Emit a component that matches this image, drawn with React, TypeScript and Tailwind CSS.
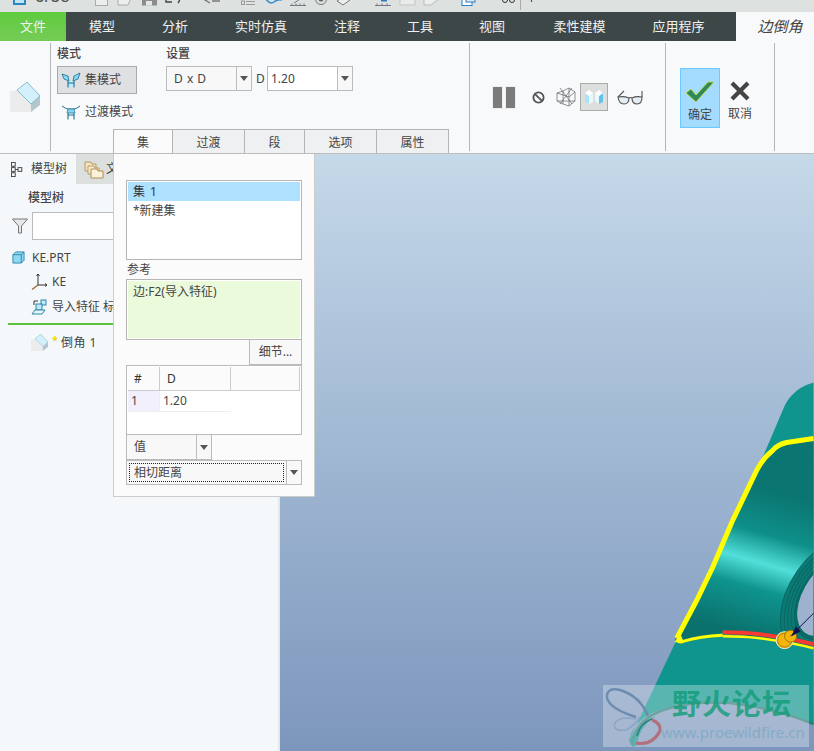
import React from "react";

const TABS = [
  { label: "模型", w: "w-[72px]" },
  { label: "分析", w: "w-[74px]" },
  { label: "实时仿真", w: "w-[98px]" },
  { label: "注释", w: "w-[74px]" },
  { label: "工具", w: "w-[72px]" },
  { label: "视图", w: "w-[72px]" },
  { label: "柔性建模", w: "w-[103px]" },
  { label: "应用程序", w: "w-[95px]" },
];

const SUB_TABS = [
  { label: "集", w: "w-[60px]", active: true },
  { label: "过渡", w: "w-[72px]" },
  { label: "段", w: "w-[60px]" },
  { label: "选项", w: "w-[72px]" },
  { label: "属性", w: "w-[72px]" },
];

function Arrow() {
  return <span className="h-0 w-0 border-x-[4px] border-t-[5px] border-x-transparent border-t-[#555]" />;
}

function ArrowBox({ className }: { className: string }) {
  return (
    <span className={`flex shrink-0 items-center justify-center self-stretch border-l border-[#bbb] ${className}`}>
      <Arrow />
    </span>
  );
}

function ChamferIcon({ className }: { className: string }) {
  return (
    <svg viewBox="10 82 30 30" className={className}>
      <polygon points="10,91 17,90 31,104 31,112 10,112" fill="#ececec" />
      <polygon points="10,91 20,83 27,82 17,90" fill="#fbfbfb" />
      <polygon points="31,104 40,96 40,105 31,112" fill="#b5c6cb" />
      <polygon points="17,90 27,82 40,96 31,104" fill="#d3f0fc" stroke="#5aa5bd" strokeWidth="0.7" />
    </svg>
  );
}

function SetModeIcon() {
  return (
    <svg viewBox="0 0 20 16" className="h-4 w-5 shrink-0">
      <path d="M1 2 L7 4 L8 9 L3 7Z M19 1 L13 4 L12 9 L17 7Z" fill="#86d6f5" stroke="#1d6f8f" strokeWidth="0.8" />
      <path d="M7 9 H13 V15 H7Z" fill="#b8ebfb" />
      <path d="M7 9 V15.5 M13 9 V15.5 M7 11 H13" stroke="#1d6f8f" strokeWidth="1.1" fill="none" />
    </svg>
  );
}

function BlendModeIcon() {
  return (
    <svg viewBox="0 0 20 16" className="h-4 w-5 shrink-0">
      <path d="M1 2 Q5 5 7 5 H13 Q15 5 19 2" stroke="#1d6f8f" strokeWidth="1" fill="none" />
      <path d="M7 5 H13 L14 9 H6Z" fill="#86d6f5" stroke="#1d6f8f" strokeWidth="0.7" />
      <path d="M7 9 V15.5 M13 9 V15.5 M7 11 H13" stroke="#1d6f8f" strokeWidth="1.1" fill="none" />
    </svg>
  );
}

function TopIcons() {
  // the quick access icons are cut off by the top of the window
  return (
    <svg viewBox="90 0 450 12" className="h-3 w-[450px] shrink-0" fill="none">
      <rect x="95.5" y="-6" width="12" height="11.5" fill="#eceeee" stroke="#aaa" />
      <path d="M118 -4 H132 L128 5 H118Z" fill="#eceeee" stroke="#aaa" />
      <rect x="142" y="-4" width="15" height="9.5" fill="#8c8c8c" />
      <rect x="146" y="1" width="6" height="4.5" fill="#e5e5e5" />
      <path d="M166 -1 V2 H172 M178 -3 Q181 0 178 3" stroke="#444" strokeWidth="1.4" />
      <path d="M210 -3 L205 0 L210 3 M212 1 H220" stroke="#777" strokeWidth="1.4" />
      <path d="M246 1.5 H255 M246 4.5 H255" stroke="#999" />
      <rect x="241.5" y="1" width="3" height="3.5" stroke="#999" />
      <path d="M265 -2 Q270 5 274 2 T282 0" stroke="#2f8fd0" strokeWidth="1.5" />
      <path d="M290 5.5 H306 M292 3.5 V5.5 M296 3.5 V5.5 M300 3.5 V5.5 M304 3.5 V5.5 M294 3 L302 -2" stroke="#778" />
      <circle cx="321" cy="-1" r="5.5" stroke="#777" />
      <circle cx="321" cy="-1" r="2.5" fill="#666" />
      <path d="M337 1 L343 -3 L350 0 L343 5Z" fill="#eee" stroke="#777" />
      <path d="M375 5.5 H391 M377 3.5 V5.5 M382 3.5 V5.5 M387 3.5 V5.5" stroke="#778" />
      <rect x="381" y="-2" width="6" height="3.5" fill="#2b7fc0" />
      <rect x="400" y="-6" width="15" height="11" fill="#e9ebeb" stroke="#c4c4c4" />
      <path d="M424 -2 H440 L431 5 H424Z" fill="#eceeee" stroke="#bbb" />
      <rect x="462" y="-3" width="10" height="8.5" fill="#fff" stroke="#2b7fc0" />
      <rect x="466" y="-5" width="9" height="7" fill="#dfe8ee" stroke="#2b7fc0" />
      <circle cx="505" cy="0" r="2.5" stroke="#333" />
      <circle cx="512" cy="0" r="2.5" stroke="#333" />
      <path d="M520.5 0 V10" stroke="#aaa" />
      <path d="M531.5 -1 V2" stroke="#555" strokeWidth="1.2" />
    </svg>
  );
}

function Model() {
  return (
    <svg viewBox="280 153 534 598" className="absolute inset-0 h-full w-full">
      <defs>
        <linearGradient id="band" gradientUnits="userSpaceOnUse" x1="772" y1="490" x2="732" y2="630">
          <stop offset="0" stopColor="#0b7571" />
          <stop offset="0.3" stopColor="#0e8f89" />
          <stop offset="0.5" stopColor="#52dfd9" />
          <stop offset="0.68" stopColor="#0f948e" />
          <stop offset="1" stopColor="#0a716d" />
        </linearGradient>
        <clipPath id="face">
          <path d="M814 438 L787 442 Q778 444 773 450 Q763 458 757 470 L733 520 L713 567 L697 600 L675 640 L682 642 Q700 635 722 633 L760 637 L814 647Z" />
        </clipPath>
      </defs>
      <path
        d="M814 382 Q800 386 792 395 Q787 400 783 410 L763 457 L629 741 Q632 725 650 714 Q680 700 730 703 Q775 708 814 724Z"
        fill="#10958e"
      />
      <path d="M629 741 L633 747 L637 745 Q640 725 657 716 Q640 720 629 741Z" fill="#10958e" />
      <path d="M814 438 L787 442 Q778 444 773 450 Q763 458 757 470 L733 520 L713 567 L697 600 L675 640 L682 642 Q700 635 722 633 L760 637 L814 647Z" fill="url(#band)" />
      <g clipPath="url(#face)" fill="none" stroke="#0a6662" strokeWidth="1">
        <ellipse cx="832" cy="595" rx="66" ry="42" transform="rotate(-55 832 595)" fill="#0b7a75" />
        <ellipse cx="832" cy="595" rx="62" ry="38" transform="rotate(-55 832 595)" />
        <ellipse cx="832" cy="595" rx="58" ry="35" transform="rotate(-55 832 595)" />
        <ellipse cx="832" cy="595" rx="54" ry="32" transform="rotate(-55 832 595)" />
        <ellipse cx="832" cy="595" rx="50" ry="29" transform="rotate(-55 832 595)" fill="#0a6a66" />
        <ellipse cx="832" cy="595" rx="46" ry="27" transform="rotate(-55 832 595)" fill="#9db2ce" stroke="none" />
      </g>
      <path
        d="M814 438 L787 442 Q778 444 773 450 Q763 458 757 470 L733 520 L713 567 L697 600 L677 638"
        fill="none"
        stroke="#ffff00"
        strokeWidth="5"
      />
      <path d="M675 642 L684 642 L680 632Z" fill="#ffff00" />
      <path d="M677 640 Q680 643 684 641 Q700 636 723 635" fill="none" stroke="#ffff00" strokeWidth="3" />
      <path d="M723 636 Q745 636 760 638 Q790 642 814 648" fill="none" stroke="#ffff00" strokeWidth="2.5" />
      <path d="M723 632 Q745 632 760 634 Q790 638 814 644" fill="none" stroke="#f93a32" strokeWidth="4" />
      <circle cx="785" cy="640" r="8.5" fill="#f5b40a" stroke="#e8e8d8" strokeWidth="1" />
      <circle cx="785" cy="640" r="7" fill="none" stroke="#8a6a10" strokeWidth="0.7" />
      <circle cx="791" cy="636" r="6" fill="#f5b40a" stroke="#8a6a10" strokeWidth="0.8" />
      <path d="M791 636 L814 613" stroke="#10104f" strokeWidth="1" />
      <path d="M792 636 L796 626 L801 631Z" fill="#10104f" />
      <path d="M632 745 Q634 726 652 715 Q682 700 730 703 Q775 708 814 724" fill="none" stroke="#2c7d76" strokeWidth="2.5" />
    </svg>
  );
}

function Watermark() {
  return (
    <div className="absolute left-[323px] top-[531px] flex h-[62px] w-[206px] bg-white/30">
      <svg viewBox="603 684 60 62" className="h-[62px] w-[60px] shrink-0" fill="none">
        <path d="M648 715 Q640 695 620 689 Q606 686 607 697 Q610 708 636 716" stroke="#6d8db0" strokeWidth="2.5" />
        <path d="M636 718 Q620 715 615 722 Q612 731 626 729 Q634 725 640 716" stroke="#8ba5c4" strokeWidth="1.5" />
        <path d="M652 719 Q661 722 660 730 Q652 745 636 742" stroke="#b2707c" strokeWidth="3" />
        <path d="M652 718 Q640 722 637 735" stroke="#2f7f86" strokeWidth="1.5" />
      </svg>
      <div className="flex flex-col pl-[9px]">
        <span className="whitespace-nowrap pt-[1px] text-[29px] font-bold leading-[36px] tracking-[1px] text-[#0f9c78]/80">
          野火论坛
        </span>
        <span className="-ml-[11px] whitespace-nowrap text-[15px] leading-[20px] text-[#83abc6]">
          www.proewildfire.cn
        </span>
      </div>
    </div>
  );
}

function Popup() {
  return (
    <div className="absolute left-[113px] top-0 z-10 flex h-[343px] w-[202px] flex-col border-x border-b border-[#ccc] bg-[#fbfbfb] px-[12px] pt-[26px] text-[12px] text-[#444]">
      <div className="h-[80px] border border-[#b5b5b5] bg-white p-[1px]">
        <div className="flex h-[19px] items-center bg-[#aee0ff] pl-[5px] tracking-[1px] text-[#333]">集 1</div>
        <div className="flex h-[19px] items-center pl-[5px]">*新建集</div>
      </div>
      <div className="flex h-[19px] items-center pl-[1px]">参考</div>
      <div className="h-[61px] border border-[#b5b5b5] bg-white p-[1px]">
        <div className="h-full bg-[#ecfadc] pl-[5px] pt-[2px] leading-[18px]">边:F2(导入特征)</div>
      </div>
      <div className="flex justify-end">
        <button className="h-[25px] w-[53px] border border-[#bbb] border-t-0 bg-[#f8f8f8] text-[12px] text-[#444]">细节...</button>
      </div>
      <div className="h-[70px] border border-[#bbb] bg-white p-[1px]">
        <div className="flex h-[24px] border-b border-[#ccc] bg-[#fbfbfb] text-[#333]">
          <div className="flex w-[32px] items-center border-r border-[#ccc] pl-[6px]">#</div>
          <div className="flex w-[71px] items-center border-r border-[#ccc] pl-[7px]">D</div>
          <div className="flex-1 border-r border-[#ccc]" />
        </div>
        <div className="flex h-[21px]">
          <div className="flex w-[32px] items-center border-r border-b border-[#eee] bg-[#f3f0fd] pl-[3px]">1</div>
          <div className="flex w-[71px] items-center border-b border-[#eee] pl-[3px]">1.20</div>
        </div>
      </div>
      <div className="flex h-[25px] w-[86px] border border-t-0 border-[#bbb] bg-[#f8f8f8]">
        <span className="flex flex-1 items-center pl-[7px]">值</span>
        <ArrowBox className="w-[15px]" />
      </div>
      <div className="flex h-[25px] border border-[#bbb] bg-[#f8f8f8]">
        <span className="m-[2px] flex flex-1 items-center border border-dotted border-[#222] pl-[4px]">相切距离</span>
        <ArrowBox className="w-[15px]" />
      </div>
    </div>
  );
}

function LeftPanel() {
  return (
    <div className="relative w-[280px] shrink-0 overflow-hidden border-r-2 border-[#e4e8ea] bg-[#f5f8fa] text-[12px] text-[#444]">
      <div className="flex h-[30px]">
        <div className="flex w-[76px] items-center gap-[5px] pl-[11px]">
          <svg viewBox="0 0 16 16" className="h-[15px] w-[15px] shrink-0" fill="none" stroke="#444" strokeWidth="1">
            <rect x="0.5" y="0.5" width="4" height="4" />
            <rect x="0.5" y="6" width="4" height="4" />
            <rect x="0.5" y="11.5" width="4" height="4" />
            <rect x="7.5" y="6" width="4" height="4" />
            <path d="M2.5 4.5 V6 M2.5 10 V11.5 M4.5 8 H7.5" />
          </svg>
          <span>模型树</span>
        </div>
        <div className="flex w-[110px] items-center gap-[2px] bg-[#dbe0df] pl-[8px]">
          <svg viewBox="0 0 20 20" className="h-5 w-5 shrink-0">
            <path d="M1 3 H7 L8 5 H12 V12 H1Z" fill="#f5e3bd" stroke="#b79a66" />
            <path d="M4 7 H10 L11 9 H15 V15 H4Z" fill="#f8ecd0" stroke="#b79a66" />
            <path d="M7 10 H13 L14 12 H19 V19 H7Z" fill="#fbf2dc" stroke="#b08e55" />
          </svg>
          <span>文件夹</span>
        </div>
      </div>
      <div className="pl-[28px] pt-[5px] font-medium leading-[18px]">模型树</div>
      <div className="mt-[5px] flex items-center gap-[4px] pl-[12px]">
        <svg viewBox="0 0 16 16" className="h-4 w-4 shrink-0">
          <path d="M0.5 1 H15.5 L9.5 8 V15 L6.5 15 V8Z" fill="#e8e8e8" stroke="#777" />
        </svg>
        <div className="h-[28px] w-[200px] border border-[#bbb] bg-white" />
      </div>
      <div className="mt-[5px] flex h-[25px] items-center gap-[7px] pl-[12px]">
        <svg viewBox="0 0 14 14" className="h-[13px] w-[13px] shrink-0">
          <path d="M1 4 L4 1 H13 V10 L10 13 H1Z" fill="#8fd8f4" stroke="#2c86a8" />
          <path d="M1 4 H10 V13 M10 4 L13 1" fill="none" stroke="#2c86a8" />
        </svg>
        <span className="leading-none">KE.PRT</span>
      </div>
      <div className="flex h-[24px] items-center gap-[5px] pl-[31px]">
        <svg viewBox="0 0 16 16" className="h-4 w-4 shrink-0" fill="none">
          <path d="M7 0 V11 H16 M5.5 2 L7 0 L8.5 2 M14 9.5 L16 11 L14 12.5" stroke="#333" />
          <path d="M7 11 L1 15.5" stroke="#a0662a" strokeWidth="1.3" />
        </svg>
        <span>KE</span>
      </div>
      <div className="flex h-[25px] items-center gap-[5px] pl-[31px]">
        <svg viewBox="0 0 16 16" className="h-4 w-4 shrink-0" fill="none">
          <rect x="10" y="1" width="5" height="5" fill="#bfe9f9" stroke="#2c86a8" />
          <rect x="5" y="5" width="6" height="6" fill="#bfe9f9" stroke="#2c86a8" />
          <path d="M1 15 L4 11 H14 L11 15Z" fill="#e8f6fb" stroke="#2c86a8" />
          <path d="M3 2 H7 M3 2 V6" stroke="#333" />
        </svg>
        <span className="whitespace-nowrap">导入特征 标识39</span>
      </div>
      <div className="ml-[8px] mt-[4px] h-[2px] w-[270px] bg-[#5cc13c]" />
      <div className="mt-[9px] flex h-[17px] items-center pl-[31px]">
        <ChamferIcon className="h-[17px] w-[17px] shrink-0" />
        <span className="ml-[4px] -mt-[6px] text-[11px] font-bold leading-none text-[#e8d800]">*</span>
        <span className="ml-[3px] tracking-[0.5px]">倒角 1</span>
      </div>
    </div>
  );
}

export default function App() {
  return (
    <div className="relative flex h-[751px] w-[814px] flex-col overflow-hidden font-['Noto_Sans','Noto_Sans_CJK_SC',sans-serif] text-[12px] text-[#444]">
      {/* title bar, cut off at the top of the window */}
      <div className="flex h-[12px] shrink-0 overflow-hidden bg-[#dde2e1]">
        <div className="flex h-[12px] w-[90px] shrink-0 items-start pl-[13px]">
          <span className="block h-[5px] w-[13px] border-2 border-t-0 border-[#2c86c0] bg-[#bfe4f5]" />
          <span className="-mt-[11px] ml-[9px] font-['Liberation_Sans',sans-serif] text-[18px] leading-[14px] text-[#555]">creo</span>
        </div>
        <TopIcons />
      </div>

      {/* ribbon tabs */}
      <div className="flex h-[29px] shrink-0 bg-[#3d4748] text-[13px] text-[#f0f2f2]">
        <div className="flex w-[66px] items-center justify-center bg-gradient-to-b from-[#5ecb3e] to-[#75cc55]">文件</div>
        {TABS.map((t) => (
          <div key={t.label} className={`flex items-center justify-center ${t.w}`}>{t.label}</div>
        ))}
        <div className="w-[10px]" />
        <div className="flex flex-1 items-center justify-center bg-[#f8f9fb] pl-[10px] text-[15px] italic text-[#444]">边倒角</div>
      </div>

      {/* ribbon */}
      <div className="flex h-[113px] shrink-0 border-b border-[#bdbdbd] bg-[#f8f9fb]">
        <div className="flex w-[50px] shrink-0 items-center pl-[10px]">
          <ChamferIcon className="h-[30px] w-[30px]" />
        </div>
        <div className="my-[2px] w-px shrink-0 bg-[#b5b5b5]" />
        <div className="flex w-[418px] shrink-0 flex-col justify-between">
          <div className="flex pl-[6px] pt-[5px]">
            <div className="w-[109px]">
              <div className="font-medium leading-[16px] text-[#444]">模式</div>
              <div className="mt-[4px] flex h-[28px] w-[80px] items-center gap-[4px] border border-[#aaa] bg-[#dfe0e1] pl-[3px]">
                <SetModeIcon />
                <span>集模式</span>
              </div>
              <div className="mt-[4px] flex h-[28px] items-center gap-[4px] pl-[4px]">
                <BlendModeIcon />
                <span>过渡模式</span>
              </div>
            </div>
            <div>
              <div className="font-medium leading-[16px]">设置</div>
              <div className="mt-[4px] flex items-center">
                <div className="flex h-[25px] w-[86px] border border-[#bbb] bg-[#f8f8f8]">
                  <span className="flex flex-1 items-center pl-[7px] tracking-[0.5px]">D x D</span>
                  <ArrowBox className="w-[15px]" />
                </div>
                <span className="ml-[4px] w-[11px]">D</span>
                <div className="flex h-[25px] w-[86px] border border-[#bbb] bg-white">
                  <span className="flex flex-1 items-center pl-[3px]">1.20</span>
                  <ArrowBox className="w-[15px] bg-[#f8f8f8]" />
                </div>
              </div>
            </div>
          </div>
          <div className="ml-[62px] flex h-[24px]">
            {SUB_TABS.map((t) => (
              <div
                key={t.label}
                className={`flex items-center justify-center border-t border-r border-[#b5b5b5] pt-[2px] first:border-l ${t.w} ${t.active ? "bg-[#fbfbfb]" : "bg-[#eff0f1]"}`}
              >
                {t.label}
              </div>
            ))}
          </div>
        </div>
        <div className="my-[2px] w-px shrink-0 bg-[#b5b5b5]" />
        <div className="flex w-[195px] shrink-0 items-center">
          <div className="ml-[22px] flex gap-[2px]">
            <span className="h-[23px] w-[11px] border border-[#eee] bg-[#7b7b7b]" />
            <span className="h-[23px] w-[11px] border border-[#eee] bg-[#7b7b7b]" />
          </div>
          <svg viewBox="0 0 14 14" className="ml-[16px] h-[13px] w-[13px] shrink-0" fill="none" stroke="#555" strokeWidth="2">
            <circle cx="7" cy="7" r="5.5" />
            <path d="M3 3 L11 11" />
          </svg>
          <svg viewBox="0 0 20 20" className="ml-[11px] h-5 w-5 shrink-0" fill="none" stroke="#666" strokeWidth="0.7">
            <path d="M1 6 L7 4 L13 1 L19 5 V14 L13 19 L7 17 L1 14Z M7 4 V17 M13 1 V19 M1 6 L13 10 L19 5 M1 14 L19 14 M4 1 L16 17 M16 1 L4 17" />
          </svg>
          <div className="ml-[4px] flex h-[28px] w-[28px] shrink-0 items-center justify-center border border-[#aaa] bg-[#dddede]">
            <svg viewBox="0 0 20 16" className="h-[16px] w-[20px]">
              <path d="M1 4 L5 7 V15 L1 12Z" fill="#a8e4fa" />
              <path d="M5 7 L9 4 V13 L5 15Z" fill="#e9f9fe" />
              <path d="M1 4 L5 1 L9 4 L5 7Z" fill="#fff" />
              <path d="M11 4 L15 7 V15 L11 12Z" fill="#e9f9fe" />
              <path d="M15 7 L19 4 V13 L15 15Z" fill="#5fc2ea" />
              <path d="M11 4 L15 1 L19 4 L15 7Z" fill="#fff" />
            </svg>
          </div>
          <svg viewBox="0 0 28 16" className="ml-[8px] h-[16px] w-[28px] shrink-0" fill="none" stroke="#555" strokeWidth="1.1">
            <path d="M2 8 Q3 15 8 15 Q13 15 13 9 Q8 7 2 8Z M16 9 Q16 15 21 15 Q26 15 26 8 Q20 7 16 9Z" fill="#e4eef2" />
            <path d="M13 9 Q14.5 8 16 9 M2 8 L8 2 M26 8 V2" />
          </svg>
        </div>
        <div className="my-[2px] w-px shrink-0 bg-[#b5b5b5]" />
        <div className="flex w-[108px] shrink-0 pl-[14px] pt-[27px]">
          <div className="flex h-[60px] w-[40px] flex-col items-center border border-[#6cc8ff] bg-[#a4dcff] pt-[12px]">
            <svg viewBox="0 0 30 22" className="h-[22px] w-[30px]">
              <path d="M1 12 L6 8 L11 14 L23 1 H29 L11 21Z" fill="#2f8a58" stroke="#d6d93a" strokeWidth="0.8" />
            </svg>
            <span className="mt-[3px] leading-[18px]">确定</span>
          </div>
          <div className="flex h-[60px] w-[40px] flex-col items-center pt-[13px]">
            <svg viewBox="0 0 20 20" className="h-[20px] w-[20px]">
              <path d="M2 2 L18 18 M18 2 L2 18" stroke="#444" strokeWidth="4.2" />
            </svg>
            <span className="mt-[4px] leading-[18px]">取消</span>
          </div>
        </div>
        <div className="my-[2px] w-px shrink-0 bg-[#b5b5b5]" />
      </div>

      {/* main area */}
      <div className="relative flex min-h-0 flex-1">
        <LeftPanel />
        <div className="relative flex-1 overflow-hidden bg-gradient-to-b from-[#c5d9e9] to-[#7d96bc]">
          <Model />
          <Watermark />
        </div>
        <Popup />
      </div>
    </div>
  );
}
